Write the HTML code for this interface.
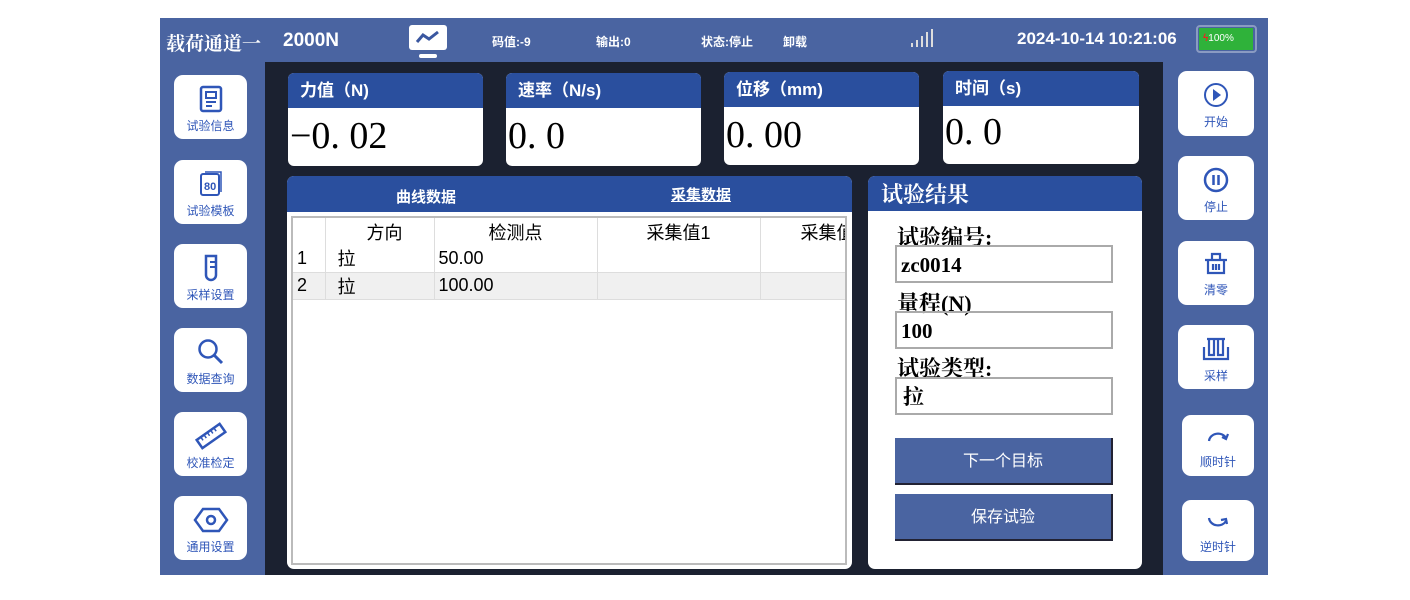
<!DOCTYPE html>
<html><head><meta charset="utf-8"><style>
*{margin:0;padding:0;box-sizing:border-box}
body{width:1410px;height:600px;background:#fff;position:relative;overflow:hidden;font-family:"Liberation Sans","Noto Sans CJK SC",sans-serif}
.abs{position:absolute}
#app{left:160px;top:18px;width:1108px;height:557px;background:#4a64a1}
#dark{left:265px;top:62px;width:898px;height:513px;background:#1b2130}
.top{color:#fff;font-weight:bold}
.btn{position:absolute;background:#fff;border-radius:9px;width:73px;height:64px;text-align:center;color:#2f56b8;font-size:12px}
.btn svg{display:block;margin:10px auto 4px}
.card{position:absolute;background:#fff;border-radius:6px;overflow:hidden;width:195px;height:93px}
.card .h{background:#2a4f9e;height:35px;color:#fff;font-size:17px;font-weight:bold;line-height:36px;padding-left:12px}
.card .v{font-family:"Liberation Serif","Noto Serif CJK SC",serif;font-size:38px;color:#000;padding-left:2px;line-height:56px}
.panel{position:absolute;background:#fff;border-radius:7px;overflow:hidden}
td{border-right:1px solid #ddd;border-bottom:1px solid #ddd;font-size:18px;color:#000;height:27px;padding:0}
.lbl{font-family:"Liberation Serif","Noto Serif CJK SC",serif;font-weight:bold;font-size:22px;color:#000;position:absolute;left:29px}
.inp{position:absolute;left:27px;width:218px;height:38px;border:2px solid #aaa;font-family:"Liberation Serif","Noto Serif CJK SC",serif;font-weight:bold;font-size:21px;line-height:36px;padding-left:4px;color:#000}
.bb{position:absolute;left:27px;width:218px;height:47px;background:#4a64a1;color:#fff;font-size:16px;text-align:center;line-height:47px;border-right:2px solid #223;border-bottom:2px solid #223}
</style></head><body>
<div id="app" class="abs"></div>
<div id="dark" class="abs"></div>

<div class="abs top" style="left:166px;top:29px;font-size:19px;font-family:'Liberation Serif','Noto Serif CJK SC',serif">载荷通道一</div>
<div class="abs top" style="left:283px;top:30px;font-size:19px">2000N</div>
<svg class="abs" style="left:407px;top:24px" width="42" height="36" viewBox="0 0 42 36"><rect x="2" y="1" width="38" height="25" rx="3" fill="#fff"/><path d="M10 18 L16 11 L22 15 L31 8" stroke="#3a57a0" stroke-width="3" fill="none"/><rect x="12" y="30" width="18" height="4" rx="2" fill="#fff"/></svg>
<div class="abs top" style="left:492px;top:33px;font-size:12px">码值:-9</div>
<div class="abs top" style="left:596px;top:33px;font-size:12px">输出:0</div>
<div class="abs top" style="left:701px;top:33px;font-size:12px">状态:停止</div>
<div class="abs top" style="left:783px;top:33px;font-size:12px">卸载</div>
<svg class="abs" style="left:910px;top:28px" width="24" height="20"><rect x="1" y="15" width="2" height="4" fill="#ddd"/><rect x="6" y="12" width="2" height="7" fill="#ddd"/><rect x="11" y="8" width="2" height="11" fill="#ddd"/><rect x="16" y="4" width="2" height="15" fill="#ddd"/><rect x="21" y="1" width="2" height="18" fill="#ddd"/></svg>
<div class="abs top" style="left:1017px;top:29px;font-size:17px">2024-10-14 10:21:06</div>
<div class="abs" style="left:1196px;top:25px;width:61px;height:28px;border:2px solid #8a9bc2;border-radius:4px"></div>
<div class="abs" style="left:1199px;top:28px;width:54px;height:22px;background:#2fb23a;color:#fff;font-size:10px;line-height:22px;padding-left:4px"><span style="color:#e22;font-weight:bold">ϟ</span>100%</div>

<!-- left buttons -->
<div class="btn" style="left:174px;top:75px"><svg width="26" height="28" viewBox="0 0 26 28"><rect x="3" y="2" width="20" height="24" rx="2" stroke="#2f56b8" stroke-width="2.5" fill="none"/><rect x="8" y="7" width="10" height="6" stroke="#2f56b8" stroke-width="2" fill="none"/><path d="M8 17h10M8 21h6" stroke="#2f56b8" stroke-width="2"/></svg>试验信息</div>
<div class="btn" style="left:174px;top:160px"><svg width="26" height="28" viewBox="0 0 26 28"><rect x="3" y="4" width="18" height="21" rx="2" stroke="#2f56b8" stroke-width="2" fill="none"/><path d="M7 2h16v20" stroke="#2f56b8" stroke-width="1.5" fill="none"/><text x="6" y="20" font-size="11" font-weight="bold" fill="#2f56b8" font-family="Liberation Sans">80</text></svg>试验模板</div>
<div class="btn" style="left:174px;top:244px"><svg width="26" height="28" viewBox="0 0 26 28"><path d="M8 2h10v19a5 5 0 0 1-10 0z" stroke="#2f56b8" stroke-width="2.5" fill="none"/><path d="M12 8h5M12 13h5" stroke="#2f56b8" stroke-width="2"/></svg>采样设置</div>
<div class="btn" style="left:174px;top:328px"><svg width="30" height="28" viewBox="0 0 30 28"><circle cx="12" cy="11" r="8.5" stroke="#2f56b8" stroke-width="2.5" fill="none"/><path d="M18 17l8 8" stroke="#2f56b8" stroke-width="3"/></svg>数据查询</div>
<div class="btn" style="left:174px;top:412px"><svg width="32" height="28" viewBox="0 0 32 28"><g transform="rotate(-35 16 14)"><rect x="2" y="9" width="28" height="10" stroke="#2f56b8" stroke-width="2.5" fill="none"/><path d="M7 9v4M11 9v4M15 9v4M19 9v4M23 9v4" stroke="#2f56b8" stroke-width="1.5"/></g></svg>校准检定</div>
<div class="btn" style="left:174px;top:496px"><svg width="36" height="28" viewBox="0 0 36 28"><path d="M10 3h16l8 11-8 11H10L2 14z" stroke="#2f56b8" stroke-width="2.5" fill="none"/><circle cx="18" cy="14" r="4" stroke="#2f56b8" stroke-width="2.5" fill="none"/></svg>通用设置</div>

<!-- right buttons -->
<div class="btn" style="left:1178px;top:71px;width:76px;height:65px"><svg width="28" height="28" viewBox="0 0 28 28"><circle cx="14" cy="14" r="11" stroke="#2f56b8" stroke-width="2" fill="none"/><path d="M11 8l8 6-8 6z" fill="#2f56b8"/></svg>开始</div>
<div class="btn" style="left:1178px;top:156px;width:76px;height:64px"><svg width="28" height="28" viewBox="0 0 28 28"><circle cx="14" cy="14" r="11" stroke="#2f56b8" stroke-width="2.5" fill="none"/><path d="M11.5 9v10M16.5 9v10" stroke="#2f56b8" stroke-width="2.5"/></svg>停止</div>
<div class="btn" style="left:1178px;top:241px;width:76px;height:64px"><svg width="28" height="26" viewBox="0 0 28 26"><path d="M3 9h22M6 9v13h16V9M10 9V3h8v6M11 13v6M14 13v6M17 13v6" stroke="#2f56b8" stroke-width="2.2" fill="none"/></svg>清零</div>
<div class="btn" style="left:1178px;top:325px;width:76px;height:64px"><svg width="30" height="28" viewBox="0 0 30 28"><path d="M3 12v12h24V12M8 4v16h5V4M17 4v16h5V4M6 4h9M15 4h9" stroke="#2f56b8" stroke-width="2.2" fill="none"/></svg>采样</div>
<div class="btn" style="left:1182px;top:415px;width:72px;height:61px"><svg width="28" height="24" viewBox="0 0 28 24"><path d="M5 16a9 8 0 0 1 17-3" stroke="#2f56b8" stroke-width="2.2" fill="none"/><path d="M18 12l4 2 2-5" stroke="#2f56b8" stroke-width="2.2" fill="none"/></svg>顺时针</div>
<div class="btn" style="left:1182px;top:500px;width:72px;height:61px"><svg width="28" height="24" viewBox="0 0 28 24"><path d="M5 8a9 8 0 0 0 17 3" stroke="#2f56b8" stroke-width="2.2" fill="none"/><path d="M17 10l5-1 1 5" stroke="#2f56b8" stroke-width="2.2" fill="none"/></svg>逆时针</div>

<!-- cards -->
<div class="card" style="left:288px;top:73px"><div class="h">力值（N)</div><div class="v">−0. 02</div></div>
<div class="card" style="left:506px;top:73px"><div class="h">速率（N/s)</div><div class="v">0. 0</div></div>
<div class="card" style="left:724px;top:72px"><div class="h">位移（mm)</div><div class="v">0. 00</div></div>
<div class="card" style="left:943px;top:71px;width:196px"><div class="h">时间（s)</div><div class="v" style="line-height:52px">0. 0</div></div>

<!-- data panel -->
<div class="panel" style="left:287px;top:176px;width:565px;height:393px">
<div style="background:#2a4f9e;height:36px;color:#fff;font-weight:bold;font-size:15px;position:relative">
<span class="abs" style="left:109px;top:10px">曲线数据</span><span class="abs" style="left:384px;top:8px;text-decoration:underline">采集数据</span></div>
<div class="abs" style="left:4px;top:40px;width:556px;height:349px;border:2px solid #bbb;overflow:hidden">
<table style="border-collapse:collapse;width:600px;table-layout:fixed">
<col style="width:32px"><col style="width:109px"><col style="width:163px"><col style="width:163px"><col style="width:133px">
<tr style="height:27px"><td style="border-bottom:none"></td><td style="text-align:center;padding-left:10px;padding-top:4px;line-height:22px;vertical-align:top;border-bottom:none">方向</td><td style="text-align:center;padding-top:4px;line-height:22px;vertical-align:top;border-bottom:none">检测点</td><td style="text-align:center;padding-top:4px;line-height:22px;vertical-align:top;border-bottom:none">采集值1</td><td style="padding-left:40px;padding-top:4px;line-height:22px;vertical-align:top;border-bottom:none">采集值2</td></tr>
<tr><td style="padding-left:4px">1</td><td style="padding-left:12px">拉</td><td style="padding-left:4px">50.00</td><td></td><td></td></tr>
<tr style="background:#f0f0f0"><td style="padding-left:4px">2</td><td style="padding-left:12px">拉</td><td style="padding-left:4px">100.00</td><td></td><td></td></tr>
</table></div></div>

<!-- result panel -->
<div class="panel" style="left:868px;top:176px;width:274px;height:393px">
<div style="background:#2a4f9e;height:35px;color:#fff;font-size:22px;line-height:38px;padding-left:13px;font-family:'Liberation Serif','Noto Serif CJK SC',serif;font-weight:bold">试验结果</div>
<div class="lbl" style="top:45px">试验编号:</div>
<div class="inp" style="top:69px">zc0014</div>
<div class="lbl" style="top:111px">量程(N)</div>
<div class="inp" style="top:135px">100</div>
<div class="lbl" style="top:176px">试验类型:</div>
<div class="inp" style="top:201px;padding-left:6px">拉</div>
<div class="bb" style="top:262px">下一个目标</div>
<div class="bb" style="top:318px">保存试验</div>
</div>
</body></html>
